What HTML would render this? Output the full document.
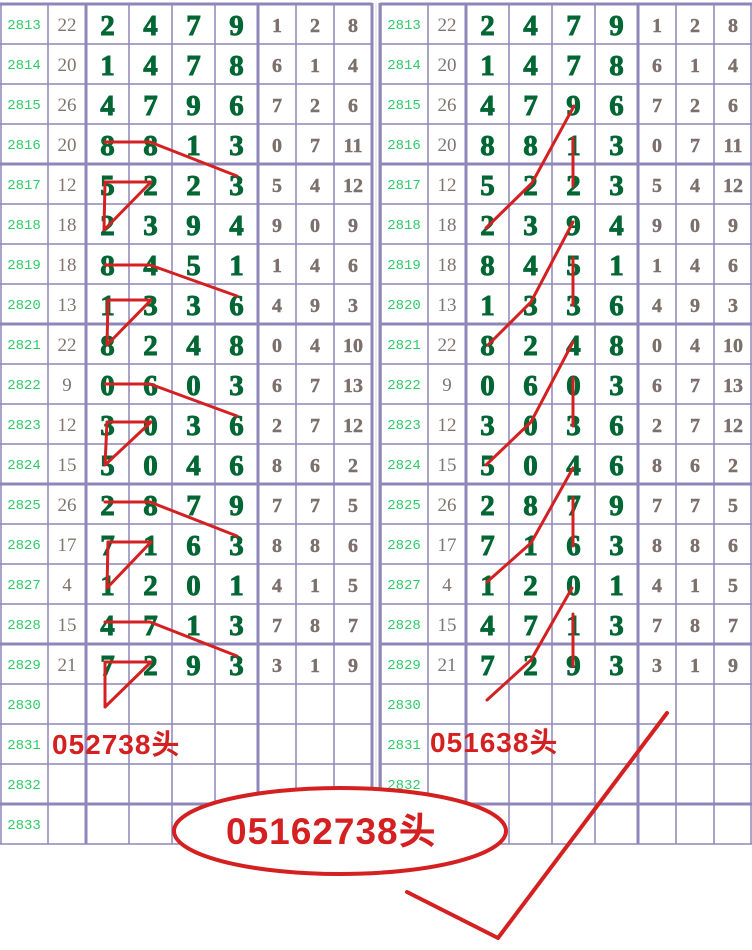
<!DOCTYPE html>
<html><head><meta charset="utf-8"><style>
html,body{margin:0;padding:0;background:#fff;width:752px;height:950px;overflow:hidden}
svg{display:block}
.id{font-family:"Liberation Mono",monospace;font-size:14px;fill:#2ecc66;text-anchor:middle}
.s{font-family:"Liberation Serif",serif;font-size:19px;fill:#7f7470;text-anchor:middle}
.g{font-family:"Liberation Serif",serif;font-weight:bold;font-size:29px;fill:#006633;stroke:#006633;stroke-width:0.9px;text-anchor:middle}
.r{font-family:"Liberation Serif",serif;font-weight:bold;font-size:20px;fill:#7b706c;stroke:#7b706c;stroke-width:0.4px;text-anchor:middle}
.red{font-family:"Liberation Sans","Noto Sans CJK SC",sans-serif;font-weight:bold;fill:#d42020}
</style></head><body>
<svg width="752" height="950" viewBox="0 0 752 950" xmlns="http://www.w3.org/2000/svg">
<defs>
<g id="grid" stroke="#8f86b9" fill="none">
<g stroke-width="1.5">
<line x1="0" y1="44" x2="372" y2="44"/><line x1="0" y1="84" x2="372" y2="84"/><line x1="0" y1="124" x2="372" y2="124"/>
<line x1="0" y1="204" x2="372" y2="204"/><line x1="0" y1="244" x2="372" y2="244"/><line x1="0" y1="284" x2="372" y2="284"/>
<line x1="0" y1="364" x2="372" y2="364"/><line x1="0" y1="404" x2="372" y2="404"/><line x1="0" y1="444" x2="372" y2="444"/>
<line x1="0" y1="524" x2="372" y2="524"/><line x1="0" y1="564" x2="372" y2="564"/><line x1="0" y1="604" x2="372" y2="604"/>
<line x1="0" y1="684" x2="372" y2="684"/><line x1="0" y1="724" x2="372" y2="724"/><line x1="0" y1="764" x2="372" y2="764"/>
<line x1="0" y1="844" x2="372" y2="844"/>
<line x1="1" y1="4" x2="1" y2="844"/><line x1="48" y1="4" x2="48" y2="844"/>
<line x1="129" y1="4" x2="129" y2="844"/><line x1="172" y1="4" x2="172" y2="844"/><line x1="215" y1="4" x2="215" y2="844"/>
<line x1="296" y1="4" x2="296" y2="844"/><line x1="334" y1="4" x2="334" y2="844"/>
</g>
<g stroke-width="3">
<line x1="0" y1="4" x2="372" y2="4"/><line x1="0" y1="164" x2="372" y2="164"/><line x1="0" y1="324" x2="372" y2="324"/>
<line x1="0" y1="484" x2="372" y2="484"/><line x1="0" y1="644" x2="372" y2="644"/><line x1="0" y1="804" x2="372" y2="804"/>
<line x1="86" y1="4" x2="86" y2="844"/><line x1="258" y1="4" x2="258" y2="844"/>
</g>
</g>
</defs>

<use href="#grid"/>
<line x1="372" y1="3" x2="372" y2="844" stroke="#8f86b9" stroke-width="3"/>
<use href="#grid" transform="translate(380,0)"/>
<line x1="380" y1="3" x2="380" y2="844" stroke="#8f86b9" stroke-width="3"/>
<line x1="751" y1="3" x2="751" y2="844" stroke="#8f86b9" stroke-width="1.5"/>
<line x1="376" y1="3" x2="376" y2="844" stroke="#dddddd" stroke-width="1"/>

<!-- LEFT TABLE -->
<g>
<text class="id" x="24" y="29">2813</text><text class="s" x="67" y="31">22</text><text class="g" x="107.5 150.5 193.5 236.5" y="35">2479</text><text class="r" x="277 315" y="32">12</text><text class="r" x="353" y="32">8</text>
<text class="id" x="24" y="69">2814</text><text class="s" x="67" y="71">20</text><text class="g" x="107.5 150.5 193.5 236.5" y="75">1478</text><text class="r" x="277 315" y="72">61</text><text class="r" x="353" y="72">4</text>
<text class="id" x="24" y="109">2815</text><text class="s" x="67" y="111">26</text><text class="g" x="107.5 150.5 193.5 236.5" y="115">4796</text><text class="r" x="277 315" y="112">72</text><text class="r" x="353" y="112">6</text>
<text class="id" x="24" y="149">2816</text><text class="s" x="67" y="151">20</text><text class="g" x="107.5 150.5 193.5 236.5" y="155">8813</text><text class="r" x="277 315" y="152">07</text><text class="r" x="353" y="152">11</text>
<text class="id" x="24" y="189">2817</text><text class="s" x="67" y="191">12</text><text class="g" x="107.5 150.5 193.5 236.5" y="195">5223</text><text class="r" x="277 315" y="192">54</text><text class="r" x="353" y="192">12</text>
<text class="id" x="24" y="229">2818</text><text class="s" x="67" y="231">18</text><text class="g" x="107.5 150.5 193.5 236.5" y="235">2394</text><text class="r" x="277 315" y="232">90</text><text class="r" x="353" y="232">9</text>
<text class="id" x="24" y="269">2819</text><text class="s" x="67" y="271">18</text><text class="g" x="107.5 150.5 193.5 236.5" y="275">8451</text><text class="r" x="277 315" y="272">14</text><text class="r" x="353" y="272">6</text>
<text class="id" x="24" y="309">2820</text><text class="s" x="67" y="311">13</text><text class="g" x="107.5 150.5 193.5 236.5" y="315">1336</text><text class="r" x="277 315" y="312">49</text><text class="r" x="353" y="312">3</text>
<text class="id" x="24" y="349">2821</text><text class="s" x="67" y="351">22</text><text class="g" x="107.5 150.5 193.5 236.5" y="355">8248</text><text class="r" x="277 315" y="352">04</text><text class="r" x="353" y="352">10</text>
<text class="id" x="24" y="389">2822</text><text class="s" x="67" y="391">9</text><text class="g" x="107.5 150.5 193.5 236.5" y="395">0603</text><text class="r" x="277 315" y="392">67</text><text class="r" x="353" y="392">13</text>
<text class="id" x="24" y="429">2823</text><text class="s" x="67" y="431">12</text><text class="g" x="107.5 150.5 193.5 236.5" y="435">3036</text><text class="r" x="277 315" y="432">27</text><text class="r" x="353" y="432">12</text>
<text class="id" x="24" y="469">2824</text><text class="s" x="67" y="471">15</text><text class="g" x="107.5 150.5 193.5 236.5" y="475">5046</text><text class="r" x="277 315" y="472">86</text><text class="r" x="353" y="472">2</text>
<text class="id" x="24" y="509">2825</text><text class="s" x="67" y="511">26</text><text class="g" x="107.5 150.5 193.5 236.5" y="515">2879</text><text class="r" x="277 315" y="512">77</text><text class="r" x="353" y="512">5</text>
<text class="id" x="24" y="549">2826</text><text class="s" x="67" y="551">17</text><text class="g" x="107.5 150.5 193.5 236.5" y="555">7163</text><text class="r" x="277 315" y="552">88</text><text class="r" x="353" y="552">6</text>
<text class="id" x="24" y="589">2827</text><text class="s" x="67" y="591">4</text><text class="g" x="107.5 150.5 193.5 236.5" y="595">1201</text><text class="r" x="277 315" y="592">41</text><text class="r" x="353" y="592">5</text>
<text class="id" x="24" y="629">2828</text><text class="s" x="67" y="631">15</text><text class="g" x="107.5 150.5 193.5 236.5" y="635">4713</text><text class="r" x="277 315" y="632">78</text><text class="r" x="353" y="632">7</text>
<text class="id" x="24" y="669">2829</text><text class="s" x="67" y="671">21</text><text class="g" x="107.5 150.5 193.5 236.5" y="675">7293</text><text class="r" x="277 315" y="672">31</text><text class="r" x="353" y="672">9</text>
<text class="id" x="24" y="709">2830</text>
<text class="id" x="24" y="749">2831</text>
<text class="id" x="24" y="789">2832</text>
<text class="id" x="24" y="829">2833</text>
</g>

<!-- RIGHT TABLE -->
<g>
<text class="id" x="404" y="29">2813</text><text class="s" x="447" y="31">22</text><text class="g" x="487.5 530.5 573.5 616.5" y="35">2479</text><text class="r" x="657 695" y="32">12</text><text class="r" x="733" y="32">8</text>
<text class="id" x="404" y="69">2814</text><text class="s" x="447" y="71">20</text><text class="g" x="487.5 530.5 573.5 616.5" y="75">1478</text><text class="r" x="657 695" y="72">61</text><text class="r" x="733" y="72">4</text>
<text class="id" x="404" y="109">2815</text><text class="s" x="447" y="111">26</text><text class="g" x="487.5 530.5 573.5 616.5" y="115">4796</text><text class="r" x="657 695" y="112">72</text><text class="r" x="733" y="112">6</text>
<text class="id" x="404" y="149">2816</text><text class="s" x="447" y="151">20</text><text class="g" x="487.5 530.5 573.5 616.5" y="155">8813</text><text class="r" x="657 695" y="152">07</text><text class="r" x="733" y="152">11</text>
<text class="id" x="404" y="189">2817</text><text class="s" x="447" y="191">12</text><text class="g" x="487.5 530.5 573.5 616.5" y="195">5223</text><text class="r" x="657 695" y="192">54</text><text class="r" x="733" y="192">12</text>
<text class="id" x="404" y="229">2818</text><text class="s" x="447" y="231">18</text><text class="g" x="487.5 530.5 573.5 616.5" y="235">2394</text><text class="r" x="657 695" y="232">90</text><text class="r" x="733" y="232">9</text>
<text class="id" x="404" y="269">2819</text><text class="s" x="447" y="271">18</text><text class="g" x="487.5 530.5 573.5 616.5" y="275">8451</text><text class="r" x="657 695" y="272">14</text><text class="r" x="733" y="272">6</text>
<text class="id" x="404" y="309">2820</text><text class="s" x="447" y="311">13</text><text class="g" x="487.5 530.5 573.5 616.5" y="315">1336</text><text class="r" x="657 695" y="312">49</text><text class="r" x="733" y="312">3</text>
<text class="id" x="404" y="349">2821</text><text class="s" x="447" y="351">22</text><text class="g" x="487.5 530.5 573.5 616.5" y="355">8248</text><text class="r" x="657 695" y="352">04</text><text class="r" x="733" y="352">10</text>
<text class="id" x="404" y="389">2822</text><text class="s" x="447" y="391">9</text><text class="g" x="487.5 530.5 573.5 616.5" y="395">0603</text><text class="r" x="657 695" y="392">67</text><text class="r" x="733" y="392">13</text>
<text class="id" x="404" y="429">2823</text><text class="s" x="447" y="431">12</text><text class="g" x="487.5 530.5 573.5 616.5" y="435">3036</text><text class="r" x="657 695" y="432">27</text><text class="r" x="733" y="432">12</text>
<text class="id" x="404" y="469">2824</text><text class="s" x="447" y="471">15</text><text class="g" x="487.5 530.5 573.5 616.5" y="475">5046</text><text class="r" x="657 695" y="472">86</text><text class="r" x="733" y="472">2</text>
<text class="id" x="404" y="509">2825</text><text class="s" x="447" y="511">26</text><text class="g" x="487.5 530.5 573.5 616.5" y="515">2879</text><text class="r" x="657 695" y="512">77</text><text class="r" x="733" y="512">5</text>
<text class="id" x="404" y="549">2826</text><text class="s" x="447" y="551">17</text><text class="g" x="487.5 530.5 573.5 616.5" y="555">7163</text><text class="r" x="657 695" y="552">88</text><text class="r" x="733" y="552">6</text>
<text class="id" x="404" y="589">2827</text><text class="s" x="447" y="591">4</text><text class="g" x="487.5 530.5 573.5 616.5" y="595">1201</text><text class="r" x="657 695" y="592">41</text><text class="r" x="733" y="592">5</text>
<text class="id" x="404" y="629">2828</text><text class="s" x="447" y="631">15</text><text class="g" x="487.5 530.5 573.5 616.5" y="635">4713</text><text class="r" x="657 695" y="632">78</text><text class="r" x="733" y="632">7</text>
<text class="id" x="404" y="669">2829</text><text class="s" x="447" y="671">21</text><text class="g" x="487.5 530.5 573.5 616.5" y="675">7293</text><text class="r" x="657 695" y="672">31</text><text class="r" x="733" y="672">9</text>
<text class="id" x="404" y="709">2830</text>
<text class="id" x="404" y="749">2831</text>
<text class="id" x="404" y="789">2832</text>
<text class="id" x="404" y="829">2833</text>
</g>

<!-- red lines left -->
<g stroke="#d42020" stroke-width="3" fill="none" stroke-linejoin="round" stroke-linecap="round">
<polyline points="105,142 150,142 237,176"/>
<polygon points="105,182 151,182 104,230"/>
<polyline points="105,265 150,265 237,296"/>
<polygon points="108,300 151,300 107,345"/>
<polyline points="105,384 150,384 237,416"/>
<polygon points="107,422 151,422 105,465"/>
<polyline points="105,502 150,502 237,536"/>
<polygon points="108,542 151,542 107,588"/>
<polyline points="105,622 150,622 237,656"/>
<polygon points="105,662 151,662 105,707"/>
</g>
<!-- red lines right -->
<g stroke="#d42020" stroke-width="3" fill="none" stroke-linejoin="round" stroke-linecap="round">
<polyline points="574,106 532,183 486,228"/>
<line x1="573" y1="138" x2="573" y2="186"/>
<polyline points="573,222 531,302 488,345"/>
<line x1="573" y1="258" x2="573" y2="305"/>
<polyline points="573,342 531,422 486,465"/>
<line x1="573" y1="378" x2="573" y2="426"/>
<polyline points="573,468 531,543 487,582"/>
<line x1="573" y1="498" x2="573" y2="546"/>
<polyline points="572,588 531,660 487,700"/>
<line x1="573" y1="614" x2="573" y2="666"/>
</g>

<text class="red" x="52" y="754" font-size="28" letter-spacing="1">052738头</text>
<text class="red" x="430" y="752" font-size="28" letter-spacing="1">051638头</text>

<ellipse cx="340" cy="831" rx="166" ry="43" fill="#fff" stroke="#d42020" stroke-width="4"/>
<text class="red" x="226" y="844" font-size="37" letter-spacing="1">05162738头</text>

<polyline points="407,892 498,938 667,713" stroke="#d42020" stroke-width="4" fill="none" stroke-linejoin="round" stroke-linecap="round"/>
</svg>
</body></html>
